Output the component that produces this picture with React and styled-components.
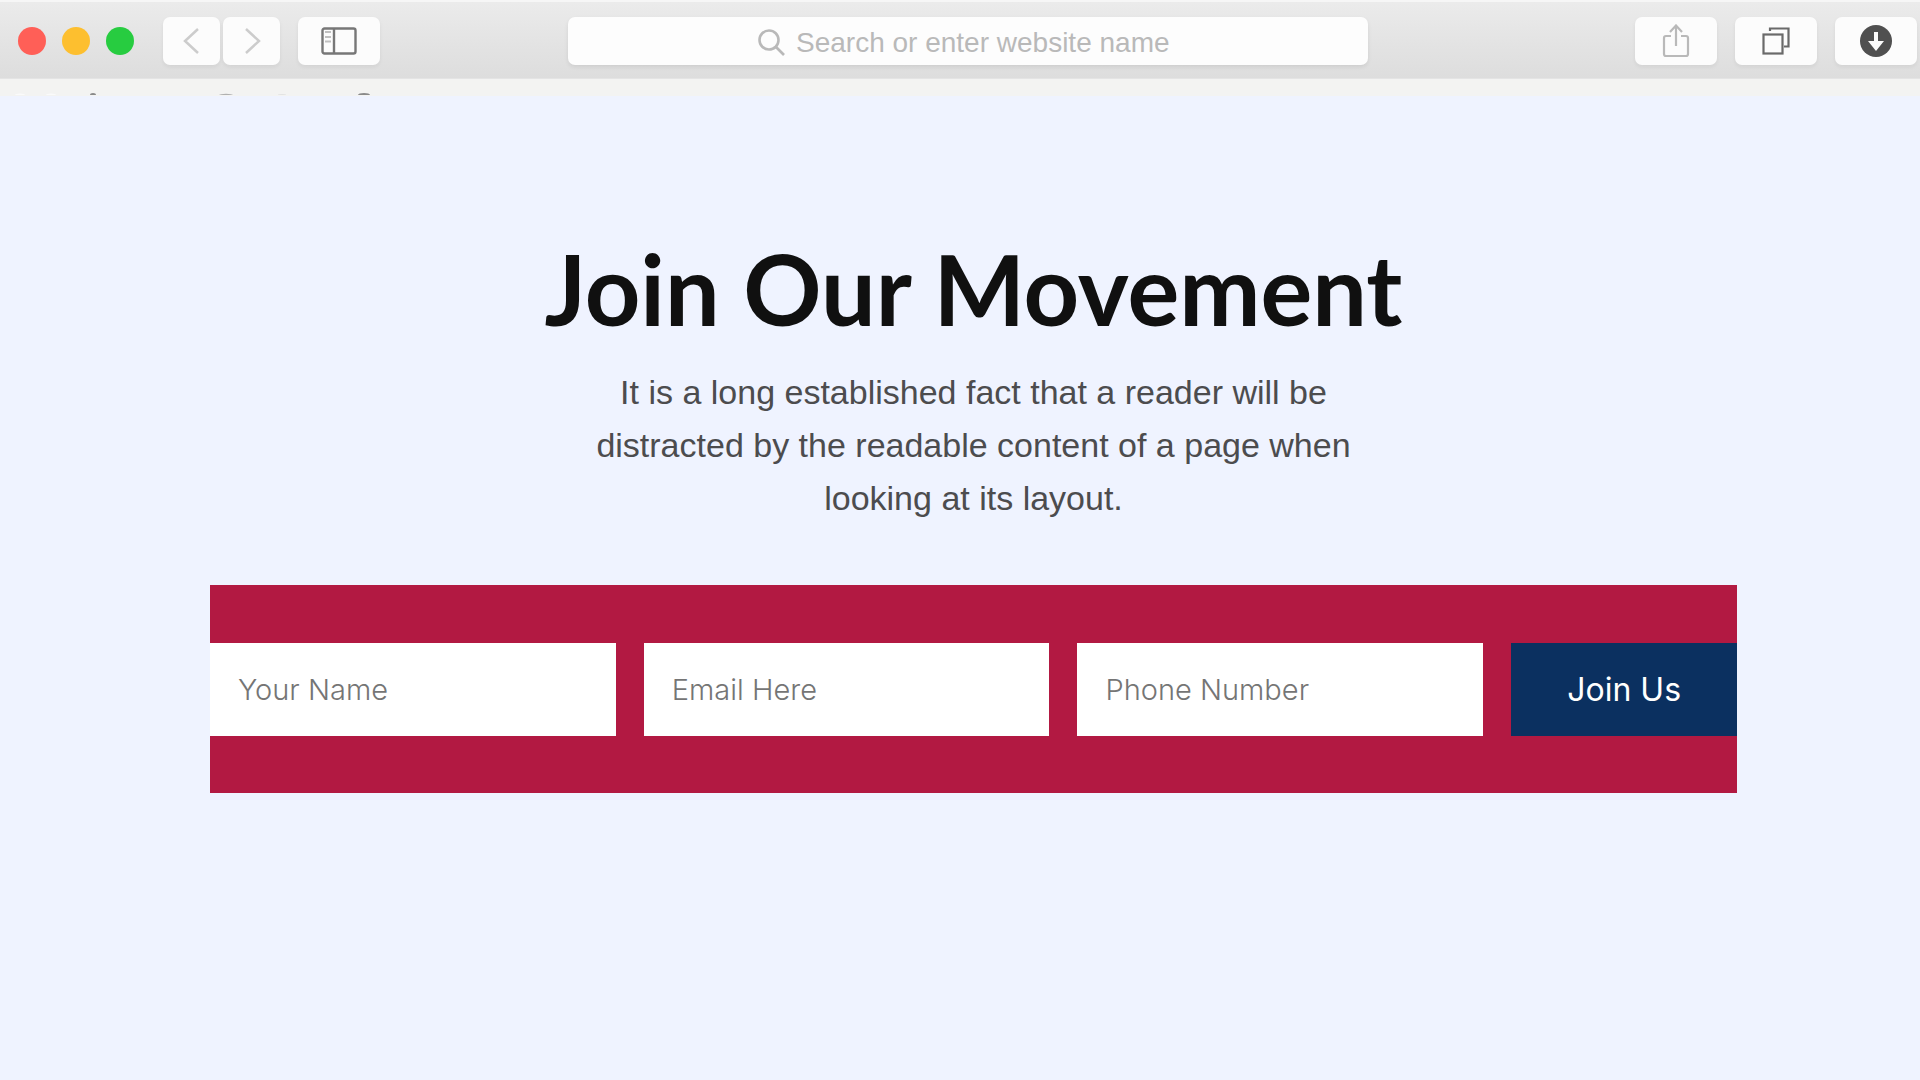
import React, { useState } from 'react';
import styled, { createGlobalStyle } from 'styled-components';

const GlobalStyle = createGlobalStyle`
  * {
    box-sizing: border-box;
  }

  body {
    margin: 0;
    background-color: #eff3ff;
  }
`;

// Browser chrome
const Toolbar = styled.header`
  display: flex;
  align-items: center;
  height: 79px;
  padding: 2px 3px 0 18px;
  background: linear-gradient(#ebebeb, #dddddd);
  border-top: 2px solid #f6f6f6;
  border-bottom: 1px solid #e4e4e4;
`;

const TrafficLights = styled.div`
  display: flex;
  gap: 16px;
  margin-right: 29px;
`;

const Light = styled.span`
  width: 28px;
  height: 28px;
  border-radius: 50%;
  background-color: ${props => props.$color};
`;

const ToolGroup = styled.div`
  display: flex;
  gap: ${props => props.$gap};
`;

const ToolButton = styled.button`
  display: flex;
  align-items: center;
  justify-content: center;
  width: ${props => (props.$narrow ? '57px' : '82px')};
  height: 48px;
  padding: 0;
  border: none;
  border-radius: 7px;
  background-color: #fcfcfc;
  box-shadow: 0 2px 4px rgba(0, 0, 0, 0.06);
  color: ${props => props.$color};
  cursor: pointer;
`;

const AddressBar = styled.label`
  display: flex;
  align-items: center;
  justify-content: center;
  gap: 11px;
  flex: 1;
  height: 48px;
  margin: 0 267px 0 188px;
  padding-top: 3px;
  border-radius: 7px;
  background-color: #fdfdfd;
  box-shadow: 0 2px 4px rgba(0, 0, 0, 0.08);
  color: #b9b9b9;
`;

const AddressInput = styled.input`
  width: 382px;
  padding: 0;
  border: none;
  outline: none;
  background: transparent;
  font-family: 'Liberation Sans', Arial, sans-serif;
  font-size: 28px;
  color: #777777;

  &::placeholder {
    color: #b9b9b9;
    opacity: 1;
  }
`;

const BookmarksStrip = styled.div`
  height: 17px;
  background-color: #f3f3f2;
`;

// Sign up section
const JoinSection = styled.main`
  padding: 141px 183px 0 210px;
`;

const Title = styled.h1`
  margin: 0;
  font-family: Lato, sans-serif;
  font-size: 97px;
  font-weight: 700;
  line-height: 104px;
  text-align: center;
  color: #101010;
`;

const Description = styled.p`
  max-width: 800px;
  margin: 25px auto 60px;
  font-family: 'Liberation Sans', Arial, sans-serif;
  font-size: 34px;
  line-height: 53px;
  text-align: center;
  color: #4c4c4e;
`;

const JoinForm = styled.form`
  display: flex;
  gap: 28px;
  padding: 58px 0 57px;
  background-color: #b21942;
`;

const Field = styled.input`
  flex: 1;
  min-width: 0;
  height: 93px;
  padding: 0 28px;
  border: none;
  border-radius: 0;
  background-color: #ffffff;
  font-family: Inter, sans-serif;
  font-size: 29px;
  font-weight: 300;
  color: #222222;

  &::placeholder {
    color: #757575;
    opacity: 1;
  }
`;

const SubmitButton = styled.button`
  padding: 0 56px;
  border: none;
  background-color: #0b3060;
  font-family: Inter, sans-serif;
  font-size: 32px;
  font-weight: 400;
  color: #ffffff;
  cursor: pointer;
`;

const BackIcon = () => (
  <svg width="18" height="28" viewBox="0 0 18 28" fill="none" stroke="currentColor" strokeWidth="2.5">
    <path d="M15 2 L2 14 L15 26" />
  </svg>
);

const ForwardIcon = () => (
  <svg width="18" height="28" viewBox="0 0 18 28" fill="none" stroke="currentColor" strokeWidth="2.5">
    <path d="M3 2 L16 14 L3 26" />
  </svg>
);

const SidebarIcon = () => (
  <svg width="36" height="28" viewBox="0 0 36 28" fill="none" stroke="currentColor" strokeWidth="2.4">
    <rect x="1.5" y="1.5" width="33" height="25" rx="2" />
    <path d="M13 1 V27" />
    <path d="M4 5 H10 M4 10 H10 M4 14.5 H10" strokeWidth="1.8" opacity="0.45" />
  </svg>
);

const SearchIcon = () => (
  <svg width="27" height="27" viewBox="0 0 27 27" fill="none" stroke="currentColor" strokeWidth="2.6">
    <circle cx="11" cy="11" r="9.5" />
    <path d="M18 18 L26 26" />
  </svg>
);

const ShareIcon = () => (
  <svg width="28" height="34" viewBox="0 0 28 34" fill="none" stroke="currentColor" strokeWidth="2.2">
    <path d="M9 12 H4 Q2 12 2 14 V30 Q2 32 4 32 H24 Q26 32 26 30 V14 Q26 12 24 12 H19" />
    <path d="M14 22 V2 M8 8 L14 1.5 L20 8" />
  </svg>
);

const TabsIcon = () => (
  <svg width="28" height="28" viewBox="0 0 28 28" fill="none" stroke="currentColor" strokeWidth="2.2">
    <rect x="1.5" y="7.5" width="19" height="19" />
    <path d="M8 4 V1.5 H26.5 V19.5 H22" />
  </svg>
);

const DownloadIcon = () => (
  <svg width="32" height="32" viewBox="0 0 32 32">
    <circle cx="16" cy="16" r="16" fill="currentColor" />
    <path d="M14 7 H18 V16 H24 L16 26 L8 16 H14 Z" fill="#fcfcfc" />
  </svg>
);

// Tops of the bookmark items peeking out above the page
const BookmarkTops = () => (
  <svg width="420" height="16" viewBox="0 0 420 16" display="block" aria-hidden="true">
    <ellipse cx="20" cy="16" rx="5" ry="1.5" fill="#fafafa" />
    <ellipse cx="51" cy="16" rx="5" ry="1.5" fill="#fafafa" />
    <ellipse cx="93" cy="16" rx="3" ry="2" fill="#8a8a8a" />
    <ellipse cx="226" cy="16" rx="7" ry="1.2" fill="#b0b0b0" />
    <ellipse cx="282" cy="16" rx="4" ry="1" fill="#e2e2e2" />
    <ellipse cx="364" cy="16" rx="6" ry="2" fill="#8a8a8a" />
  </svg>
);

const lights = ['#ff5f57', '#fdbf2f', '#27cc40'];

const fields = [
  { name: 'name', type: 'text', placeholder: 'Your Name' },
  { name: 'email', type: 'email', placeholder: 'Email Here' },
  { name: 'phone', type: 'tel', placeholder: 'Phone Number' },
];

const BrowserBar = () => (
  <>
    <Toolbar>
      <TrafficLights>
        {lights.map(color => (
          <Light key={color} $color={color} />
        ))}
      </TrafficLights>
      <ToolGroup $gap="18px">
        <ToolGroup $gap="3px">
          <ToolButton $narrow $color="#cccccc" aria-label="Back"><BackIcon /></ToolButton>
          <ToolButton $narrow $color="#cccccc" aria-label="Forward"><ForwardIcon /></ToolButton>
        </ToolGroup>
        <ToolButton $color="#777777" aria-label="Sidebar"><SidebarIcon /></ToolButton>
      </ToolGroup>
      <AddressBar>
        <SearchIcon />
        <AddressInput type="text" placeholder="Search or enter website name" aria-label="Address" />
      </AddressBar>
      <ToolGroup $gap="18px">
        <ToolButton $color="#b9b9b9" aria-label="Share"><ShareIcon /></ToolButton>
        <ToolButton $color="#6a6a6a" aria-label="Tabs"><TabsIcon /></ToolButton>
        <ToolButton $color="#505050" aria-label="Downloads"><DownloadIcon /></ToolButton>
      </ToolGroup>
    </Toolbar>
    <BookmarksStrip>
      <BookmarkTops />
    </BookmarksStrip>
  </>
);

const App = () => {
  const [values, setValues] = useState({ name: '', email: '', phone: '' });

  const handleChange = (e) => {
    setValues({ ...values, [e.target.name]: e.target.value });
  };

  return (
    <>
      <GlobalStyle />
      <BrowserBar />
      <JoinSection>
        <Title>Join Our Movement</Title>
        <Description>
          It is a long established fact that a reader will be distracted by the
          readable content of a page when looking at its layout.
        </Description>
        <JoinForm onSubmit={(e) => e.preventDefault()}>
          {fields.map(field => (
            <Field
              key={field.name}
              name={field.name}
              type={field.type}
              placeholder={field.placeholder}
              aria-label={field.placeholder}
              value={values[field.name]}
              onChange={handleChange}
            />
          ))}
          <SubmitButton type="submit">Join Us</SubmitButton>
        </JoinForm>
      </JoinSection>
    </>
  );
};

export default App;
